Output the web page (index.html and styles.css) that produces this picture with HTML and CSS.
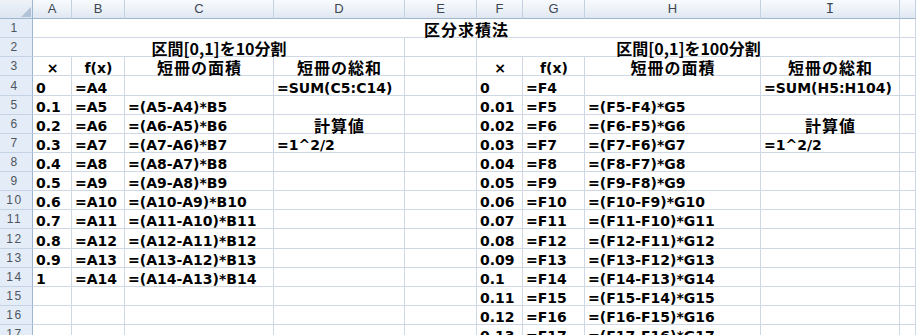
FILE: index.html
```html
<!DOCTYPE html>
<html lang="ja">
<head>
<meta charset="utf-8">
<title>区分求積法</title>
<link rel="stylesheet" href="styles.css">
</head>
<body>
<div class="sheet">
  <div class="corner"><svg class="tri" width="10" height="10" viewBox="0 0 10 10"><polygon points="10,0 10,10 0,10" fill="#b3c3d7"/></svg></div>
  <div class="ch">A</div><div class="ch">B</div><div class="ch">C</div><div class="ch">D</div><div class="ch">E</div><div class="ch">F</div><div class="ch">G</div><div class="ch">H</div><div class="ch"><span class="ci">I</span></div><div class="ch"></div>

  <div class="rh">1</div><div class="c ctr span9"><span class="jp">区分求積法</span></div><div class="c"></div>

  <div class="rh">2</div><div class="c ctr span4"><span class="jp mix">区間[0,1]を10分割</span></div><div class="c"></div><div class="c ctr span4"><span class="jp mix">区間[0,1]を100分割</span></div><div class="c"></div>

  <div class="rh">3</div><div class="c ctr">×</div><div class="c ctr">f(x)</div><div class="c ctr"><span class="jp">短冊の面積</span></div><div class="c ctr"><span class="jp">短冊の総和</span></div><div class="c"></div><div class="c ctr">×</div><div class="c ctr">f(x)</div><div class="c ctr"><span class="jp">短冊の面積</span></div><div class="c ctr"><span class="jp">短冊の総和</span></div><div class="c"></div>

  <div class="rh">4</div><div class="c">0</div><div class="c">=A4</div><div class="c"></div><div class="c">=SUM(C5:C14)</div><div class="c"></div><div class="c">0</div><div class="c">=F4</div><div class="c"></div><div class="c">=SUM(H5:H104)</div><div class="c"></div>

  <div class="rh">5</div><div class="c">0.1</div><div class="c">=A5</div><div class="c">=(A5-A4)*B5</div><div class="c"></div><div class="c"></div><div class="c">0.01</div><div class="c">=F5</div><div class="c">=(F5-F4)*G5</div><div class="c"></div><div class="c"></div>

  <div class="rh">6</div><div class="c">0.2</div><div class="c">=A6</div><div class="c">=(A6-A5)*B6</div><div class="c ctr"><span class="jp">計算値</span></div><div class="c"></div><div class="c">0.02</div><div class="c">=F6</div><div class="c">=(F6-F5)*G6</div><div class="c ctr"><span class="jp">計算値</span></div><div class="c"></div>

  <div class="rh">7</div><div class="c">0.3</div><div class="c">=A7</div><div class="c">=(A7-A6)*B7</div><div class="c">=1^2/2</div><div class="c"></div><div class="c">0.03</div><div class="c">=F7</div><div class="c">=(F7-F6)*G7</div><div class="c">=1^2/2</div><div class="c"></div>

  <div class="rh">8</div><div class="c">0.4</div><div class="c">=A8</div><div class="c">=(A8-A7)*B8</div><div class="c"></div><div class="c"></div><div class="c">0.04</div><div class="c">=F8</div><div class="c">=(F8-F7)*G8</div><div class="c"></div><div class="c"></div>

  <div class="rh">9</div><div class="c">0.5</div><div class="c">=A9</div><div class="c">=(A9-A8)*B9</div><div class="c"></div><div class="c"></div><div class="c">0.05</div><div class="c">=F9</div><div class="c">=(F9-F8)*G9</div><div class="c"></div><div class="c"></div>

  <div class="rh">10</div><div class="c">0.6</div><div class="c">=A10</div><div class="c">=(A10-A9)*B10</div><div class="c"></div><div class="c"></div><div class="c">0.06</div><div class="c">=F10</div><div class="c">=(F10-F9)*G10</div><div class="c"></div><div class="c"></div>

  <div class="rh">11</div><div class="c">0.7</div><div class="c">=A11</div><div class="c">=(A11-A10)*B11</div><div class="c"></div><div class="c"></div><div class="c">0.07</div><div class="c">=F11</div><div class="c">=(F11-F10)*G11</div><div class="c"></div><div class="c"></div>

  <div class="rh">12</div><div class="c">0.8</div><div class="c">=A12</div><div class="c">=(A12-A11)*B12</div><div class="c"></div><div class="c"></div><div class="c">0.08</div><div class="c">=F12</div><div class="c">=(F12-F11)*G12</div><div class="c"></div><div class="c"></div>

  <div class="rh">13</div><div class="c">0.9</div><div class="c">=A13</div><div class="c">=(A13-A12)*B13</div><div class="c"></div><div class="c"></div><div class="c">0.09</div><div class="c">=F13</div><div class="c">=(F13-F12)*G13</div><div class="c"></div><div class="c"></div>

  <div class="rh">14</div><div class="c">1</div><div class="c">=A14</div><div class="c">=(A14-A13)*B14</div><div class="c"></div><div class="c"></div><div class="c">0.1</div><div class="c">=F14</div><div class="c">=(F14-F13)*G14</div><div class="c"></div><div class="c"></div>

  <div class="rh">15</div><div class="c"></div><div class="c"></div><div class="c"></div><div class="c"></div><div class="c"></div><div class="c">0.11</div><div class="c">=F15</div><div class="c">=(F15-F14)*G15</div><div class="c"></div><div class="c"></div>

  <div class="rh">16</div><div class="c"></div><div class="c"></div><div class="c"></div><div class="c"></div><div class="c"></div><div class="c">0.12</div><div class="c">=F16</div><div class="c">=(F16-F15)*G16</div><div class="c"></div><div class="c"></div>

  <div class="rh">17</div><div class="c"></div><div class="c"></div><div class="c"></div><div class="c"></div><div class="c"></div><div class="c">0.13</div><div class="c">=F17</div><div class="c">=(F17-F16)*G17</div><div class="c"></div><div class="c"></div>
</div>
</body>
</html>
```

FILE: styles.css
```css
html, body {
  margin: 0;
  padding: 0;
  background: #ffffff;
  overflow: hidden;
}

.sheet {
  display: grid;
  grid-template-columns: 33px 39px 53px 149px 131px 72px 46px 62px 176px 139px 16px;
  grid-template-rows: 19px;
  grid-auto-rows: 19.13px;
  font-family: "DejaVu Sans", "Noto Sans CJK JP", sans-serif;
  font-weight: bold;
  font-size: 14px;
  color: #000;
}

.corner {
  background: linear-gradient(#eef2f8, #dce5f0);
  border-right: 1px solid #9eb6ce;
  border-bottom: 1px solid #9eb6ce;
  box-sizing: border-box;
  display: flex;
  justify-content: flex-end;
  align-items: flex-end;
  padding: 0 1px 1px 0;
}

.tri {
  display: block;
}

.ch {
  background: linear-gradient(#f8fafd 0%, #eef3f9 45%, #dfe7f1 100%);
  border-right: 1px solid #c3d1e2;
  border-bottom: 1px solid #9eb6ce;
  box-sizing: border-box;
  display: flex;
  justify-content: center;
  align-items: flex-end;
  padding-bottom: 2px;
  font-family: "Liberation Sans", sans-serif;
  font-weight: normal;
  font-size: 13px;
  line-height: 14px;
  color: #3e4652;
}

.ci {
  font-family: "Liberation Mono", monospace;
  font-size: 14px;
}

.rh {
  background: #e4ecf7;
  border-right: 1px solid #9eb6ce;
  border-bottom: 1px solid #c5d3e4;
  box-sizing: border-box;
  display: flex;
  justify-content: center;
  align-items: flex-end;
  padding: 0 3px 3px 0;
  font-family: "Liberation Sans", sans-serif;
  font-weight: normal;
  font-size: 12px;
  letter-spacing: 1.5px;
  line-height: 12px;
  color: #4d5560;
}

.c {
  border-right: 1px solid #d0d7e5;
  border-bottom: 1px solid #d0d7e5;
  box-sizing: border-box;
  display: flex;
  align-items: flex-end;
  padding: 0 2px 0 3px;
  white-space: nowrap;
  line-height: 14px;
}

.ctr {
  justify-content: center;
}

.span9 {
  grid-column: span 9;
}

.span4 {
  grid-column: span 4;
}

.jp {
  font-family: "Noto Sans CJK JP", sans-serif;
  font-size: 16px;
  line-height: 15px;
  letter-spacing: 1px;
}

.mix {
  letter-spacing: 0;
}
```
